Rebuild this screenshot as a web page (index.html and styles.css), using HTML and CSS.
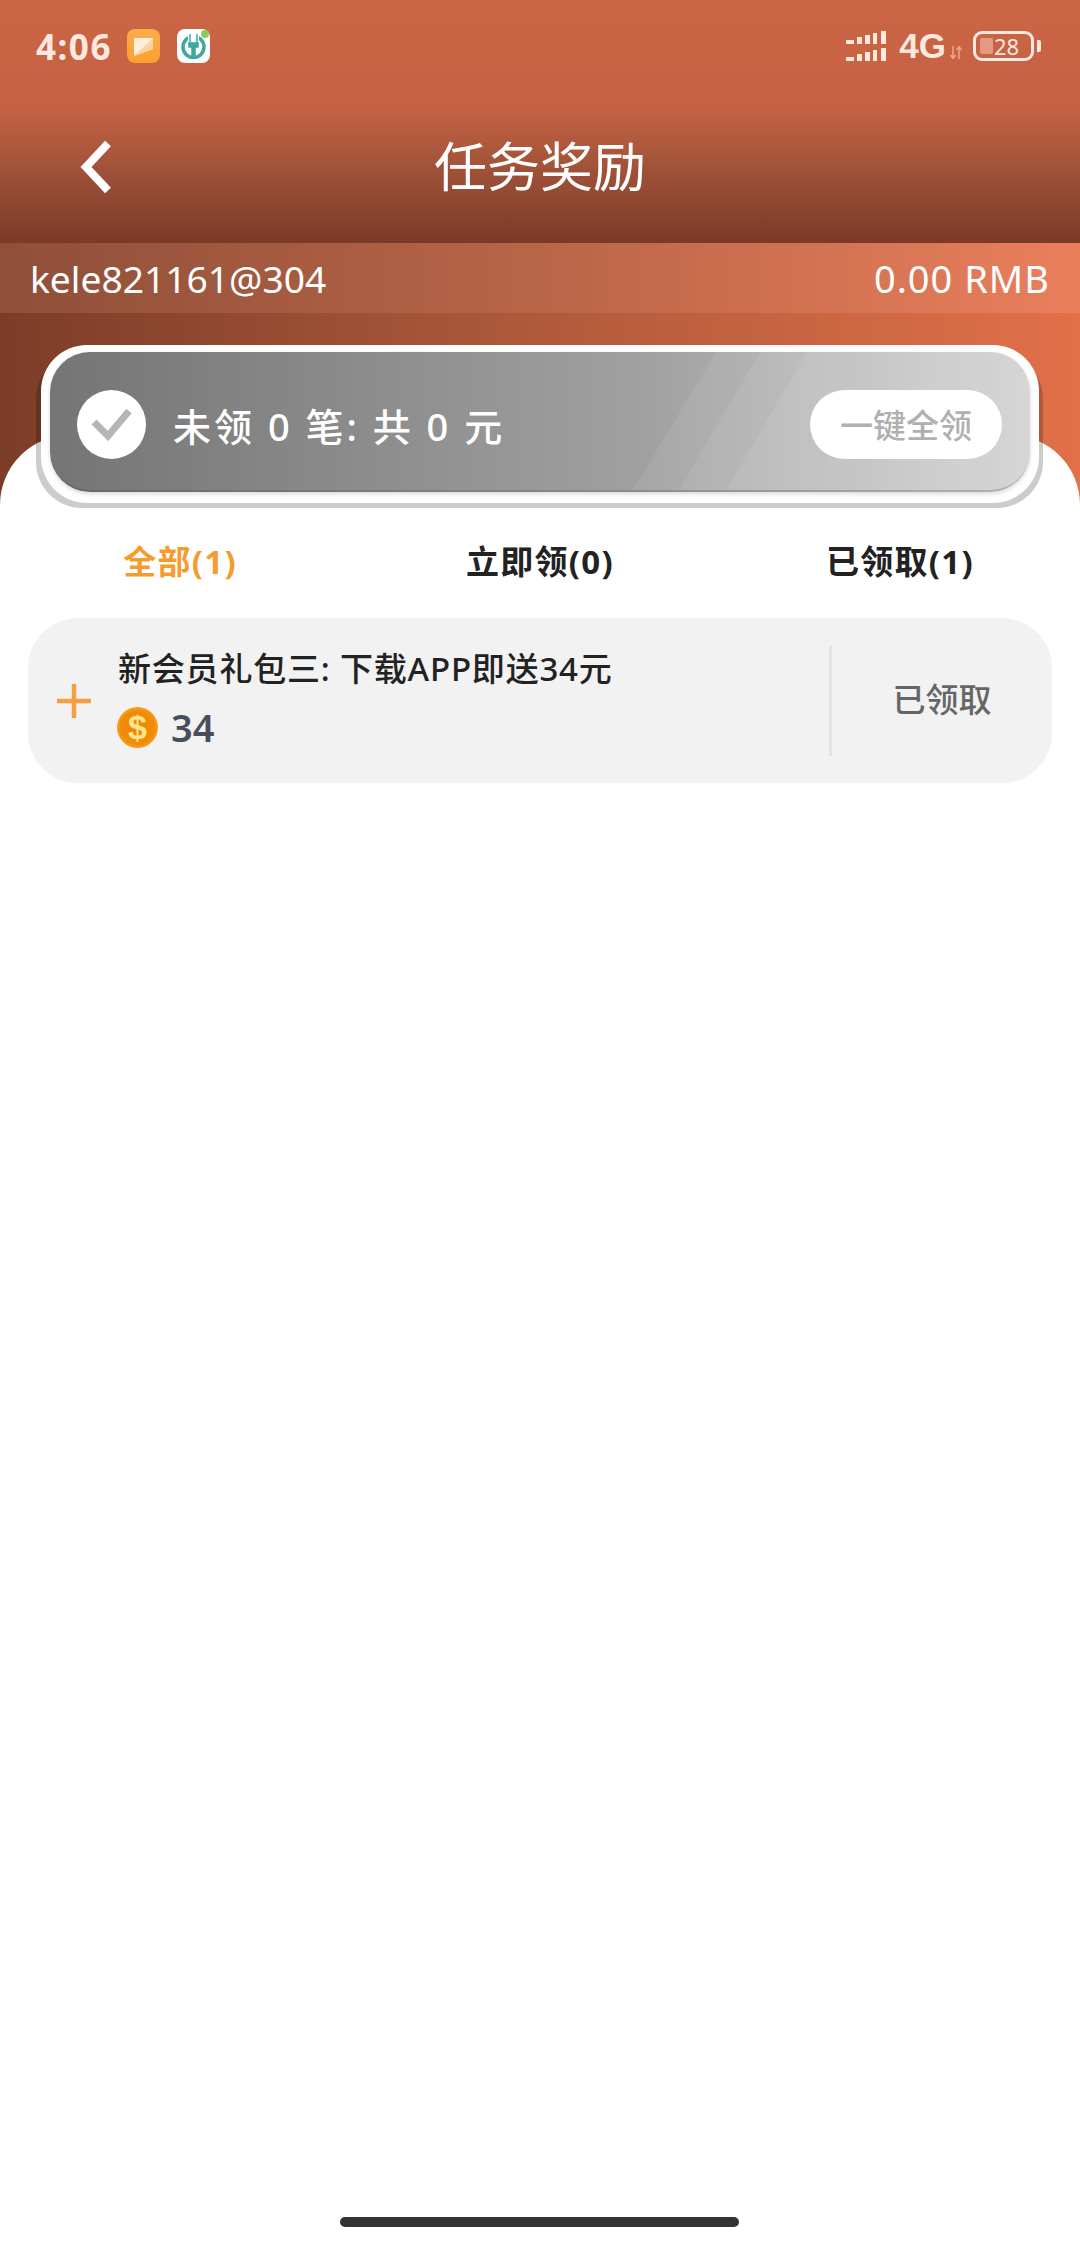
FILE: index.html
```html
<!DOCTYPE html>
<html lang="zh-CN">
<head>
    <meta charset="UTF-8">
    <title>任务奖励</title>
    <link rel="stylesheet" href="styles.css">
</head>
<body>
<div class="page">
    <div class="top-bar">
        <div class="status-bar">
            <div class="status-left">
                <span class="clock">4:06</span>
                <svg class="app-icon" viewBox="0 0 33 34">
                    <defs>
                        <linearGradient id="note" x1="0" y1="0" x2="0" y2="1">
                            <stop offset="0" stop-color="#fbad4c"/>
                            <stop offset="1" stop-color="#fca02e"/>
                        </linearGradient>
                    </defs>
                    <rect width="33" height="34" rx="8" fill="url(#note)"/>
                    <path d="M7 9h19v11L7 27z" fill="#fdeedd"/>
                    <path d="M26 9v11L7 27z" fill="#fcd3a3"/>
                </svg>
                <svg class="app-icon app-icon-gap" viewBox="0 0 33 34">
                    <rect width="33" height="34" rx="8" fill="#fdfefd"/>
                    <circle cx="16.500" cy="18" r="10.500" fill="none" stroke="#3fa89f" stroke-width="3.500"/>
                    <rect x="11" y="3" width="11" height="13" fill="#fdfefd"/>
                    <path d="M13 5v9M20 5v9M12 14h9v4h-3v11h-3V18h-3z" fill="#3fa89f" stroke="#3fa89f" stroke-width="1.500"/>
                    <circle cx="28" cy="5" r="4" fill="#8ccb5a"/>
                </svg>
            </div>
            <div class="status-right">
                <svg class="signal" width="40" height="31" viewBox="0 0 40 31">
                    <g fill="#fde8e0">
                        <rect x="0" y="9" width="8" height="4"/><rect x="11" y="6" width="5" height="7"/><rect x="19" y="4" width="5" height="9"/><rect x="27" y="2" width="4" height="11"/><rect x="35" y="0" width="5" height="13"/>
                        <rect x="0" y="26" width="8" height="4"/><rect x="11" y="23" width="5" height="7"/><rect x="19" y="21" width="5" height="9"/><rect x="27" y="19" width="4" height="11"/><rect x="35" y="17" width="5" height="13"/>
                    </g>
                </svg>
                <span class="net">4G</span>
                <svg class="arrows" width="12" height="13" viewBox="0 0 12 13">
                    <path d="M3 0v12M0.500 9L3 12.500 5.500 9M9 13V1M6.500 4L9 0.500 11.500 4" fill="none" stroke="#eda58c" stroke-width="1.500"/>
                </svg>
                <div class="battery">
                    <span class="battery-level"></span>
                    <span class="battery-num">28</span>
                </div>
                <span class="battery-nub"></span>
            </div>
        </div>
        <div class="nav-bar">
            <svg class="back" width="32" height="54" viewBox="0 0 32 54">
                <path d="M28 3.500L6 27l22 23.500" fill="none" stroke="#fff" stroke-width="8"/>
            </svg>
            <h1 class="page-title">任务奖励</h1>
        </div>
    </div>

    <div class="user-row">
        <span class="user-name">kele821161@304</span>
        <span class="user-balance">0.00 RMB</span>
    </div>

    <div class="hero">
        <div class="claim-wrap">
            <div class="claim-card">
                <div class="claim-inner">
                    <svg class="claim-stripes" viewBox="0 0 980 140" preserveAspectRatio="none">
                        <path d="M666 0h314v140H583z" fill="#fff" fill-opacity=".07"/>
                        <path d="M710 0h270v140H629z" fill="#fff" fill-opacity=".07"/>
                        <path d="M757 0h223v140H676z" fill="#fff" fill-opacity=".08"/>
                    </svg>
                    <div class="claim-check">
                        <svg width="42" height="34" viewBox="0 0 42 34">
                            <path d="M3 15l14 14L38 4" fill="none" stroke="#b5b5b5" stroke-width="7"/>
                        </svg>
                    </div>
                    <div class="claim-text">未领 0 笔: 共 0 元</div>
                    <button class="claim-button">一键全领</button>
                </div>
            </div>
        </div>
    </div>

    <div class="sheet">
        <div class="tabs">
            <div class="tab tab-active">全部(1)</div>
            <div class="tab">立即领(0)</div>
            <div class="tab">已领取(1)</div>
        </div>

        <div class="task-row">
            <svg class="task-plus" width="34" height="34" viewBox="0 0 34 34">
                <path d="M0 17h34M17 0v34" stroke="#f59f42" stroke-width="4.500"/>
            </svg>
            <div class="task-info">
                <div class="task-title">新会员礼包三: 下载APP即送34元</div>
                <div class="task-amount">
                    <span class="coin">$</span>
                    <span class="amount-num">34</span>
                </div>
            </div>
            <div class="task-status">已领取</div>
        </div>
    </div>

    <div class="home-bar"></div>
</div>
</body>
</html>
```

FILE: styles.css
```css
* {
    box-sizing: border-box;
}

body {
    margin: 0;
    background-color: #fff;
    font-family: "Noto Sans", "Noto Sans CJK SC", sans-serif;
}

.page {
    position: relative;
    width: 1080px;
    height: 2248px;
    display: flex;
    flex-direction: column;
    overflow: hidden;
    background-color: #fff;
}

.top-bar {
    height: 243px;
    background: linear-gradient(to bottom, #ca6545 0, #c66243 105px, #a5553a 160px, #7a3a28 243px);
}

.status-bar {
    height: 92px;
    padding: 0 39px 0 36px;
    display: flex;
    justify-content: space-between;
    align-items: center;
    color: #fde8e0;
}

.status-left, .status-right {
    display: flex;
    align-items: center;
}

.clock {
    font-size: 35px;
    font-weight: 700;
    font-family: "Noto Sans", sans-serif;
    letter-spacing: 1.500px;
}

.app-icon {
    width: 33px;
    height: 34px;
    margin-left: 15px;
}

.app-icon-gap {
    margin-left: 17px;
}

.net {
    margin-left: 13px;
    font-family: "Liberation Sans", sans-serif;
    font-size: 35px;
    font-weight: 700;
}

.arrows {
    margin: 12px 0 0 4px;
}

.battery {
    width: 61px;
    height: 30px;
    margin-left: 11px;
    border: 3px solid #fde8e0;
    border-radius: 9px;
    position: relative;
    display: flex;
    justify-content: center;
    align-items: center;
}

.battery-level {
    position: absolute;
    left: 4px;
    top: 4px;
    width: 13px;
    height: 16px;
    border-radius: 2px;
    background-color: #e39a82;
}

.battery-num {
    position: relative;
    margin-left: 6px;
    font-size: 22px;
    line-height: 24px;
}

.battery-nub {
    width: 4px;
    height: 12px;
    margin-left: 3px;
    border-radius: 0 2px 2px 0;
    background-color: #fde8e0;
}

.nav-bar {
    height: 151px;
    padding: 0 80px 2px;
    display: grid;
    grid-template-columns: 1fr auto 1fr;
    align-items: center;
}

.page-title {
    margin: 0;
    color: #fff;
    font-size: 53px;
    font-weight: 400;
    line-height: 60px;
}

.user-row {
    height: 70px;
    padding: 0 30px;
    display: flex;
    justify-content: space-between;
    align-items: center;
    color: #fff;
    font-size: 38px;
    background: linear-gradient(to right, #8f4f38 0, #b96548 50%, #ea7f5c 100%);
}

.user-name {
    font-size: 37.200px;
}

.user-balance {
    letter-spacing: 1px;
}

.hero {
    height: 192px;
    padding: 32px 41px 0;
    background: linear-gradient(to right, #7c3d28 0, #b05a3b 50%, #e27049 100%);
}

.claim-wrap {
    position: relative;
    z-index: 1;
}

/* darker lip showing behind the white card */
.claim-wrap::before {
    content: "";
    position: absolute;
    z-index: -1;
    left: -5px;
    right: -4px;
    top: 8px;
    bottom: -5px;
    border-radius: 46px;
    background-color: rgba(0, 0, 0, 0.2);
}

.claim-card {
    height: 158px;
    padding: 7px 9px 11px;
    border-radius: 46px;
    background-color: #fff;
}

.claim-inner {
    position: relative;
    height: 140px;
    padding: 6px 28px 0 27px;
    display: flex;
    align-items: center;
    overflow: hidden;
    border-radius: 40px;
    border-bottom: 2px solid rgba(0, 0, 0, 0.12);
    background: linear-gradient(to right, #757575 0, #a0a0a0 60%, #cdcdcd 100%);
    box-shadow: 0 2px 4px rgba(0, 0, 0, 0.15);
}

.claim-stripes {
    position: absolute;
    left: 0;
    top: 0;
    width: 100%;
    height: 100%;
}

.claim-check {
    position: relative;
    width: 69px;
    height: 69px;
    border-radius: 50%;
    background-color: #fff;
    display: flex;
    justify-content: center;
    align-items: center;
}

.claim-text {
    position: relative;
    flex: 1;
    margin-left: 27px;
    color: #fff;
    font-size: 38px;
    font-weight: 500;
    letter-spacing: 3px;
    white-space: pre;
}

.claim-button {
    position: relative;
    width: 192px;
    height: 69px;
    padding: 0;
    border: none;
    border-radius: 35px;
    background-color: #fff;
    color: #b0b0b0;
    font-family: inherit;
    font-size: 33px;
    font-weight: 500;
}

.sheet {
    flex: 1;
    margin-top: -70px;
    padding-top: 85px;
    border-radius: 70px 70px 0 0;
    background-color: #fff;
}

.tabs {
    height: 80px;
    display: grid;
    grid-template-columns: repeat(3, 1fr);
    align-items: center;
    text-align: center;
    color: #222;
    font-size: 33px;
    font-weight: 700;
    letter-spacing: 1.300px;
}

.tab-active {
    color: #f59c30;
}

.task-row {
    height: 165px;
    margin: 18px 28px 0;
    padding-left: 29px;
    display: flex;
    align-items: center;
    border-radius: 50px;
    background-color: #f2f2f2;
}

.task-plus {
    flex-shrink: 0;
}

.task-info {
    flex: 1;
    margin-left: 27px;
    padding-bottom: 4px;
}

.task-title {
    color: #222;
    font-size: 33px;
    font-weight: 500;
    letter-spacing: 0.800px;
    line-height: 44px;
    margin-top: -1px;
}

.task-amount {
    margin-top: 14px;
    margin-left: -1px;
    display: flex;
    align-items: center;
}

.coin {
    width: 41px;
    height: 41px;
    border-radius: 50%;
    background: radial-gradient(circle, #ee8808 0, #f08c0a 58%, #fdb62a 82%, #fbb020 100%);
    color: #fdE58a;
    font-family: "Liberation Sans", sans-serif;
    font-size: 34px;
    font-weight: 700;
    line-height: 41px;
    text-align: center;
}

.amount-num {
    margin-left: 13px;
    color: #4a4d5a;
    font-size: 38px;
    font-weight: 600;
    line-height: 44px;
}

.task-status {
    width: 223px;
    height: 110px;
    padding-bottom: 5px;
    border-left: 3px solid #e2e2e2;
    display: flex;
    justify-content: center;
    align-items: center;
    color: #666;
    font-size: 33px;
    font-weight: 500;
}

.home-bar {
    position: absolute;
    left: 340px;
    top: 2217px;
    width: 399px;
    height: 10px;
    border-radius: 5px;
    background-color: #333;
}
```
